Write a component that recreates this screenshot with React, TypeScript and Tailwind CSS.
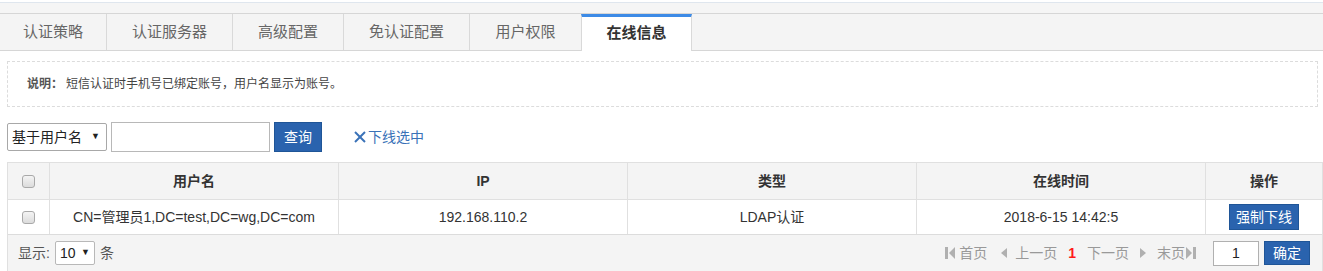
import React from "react";

const tabs = [
  { label: "认证策略", w: "w-[107px]" },
  { label: "认证服务器", w: "w-[126px]" },
  { label: "高级配置", w: "w-[111px]" },
  { label: "免认证配置", w: "w-[126px]" },
  { label: "用户权限", w: "w-[112px]" },
];

const font = "font-['Liberation_Sans','Noto_Sans_CJK_SC',sans-serif]";

function Checkbox() {
  return <span className="inline-block w-[13px] h-[13px] rounded-[3px] border border-[#a9a9a9] bg-gradient-to-b from-[#f4f4f4] to-[#dcdcdc]" />;
}

function PageIcon({ kind }: { kind: "first" | "prev" | "next" | "last" }) {
  return (
    <svg width="12" height="14" viewBox="0 0 12 14" className="fill-[#b0b0b0]">
      {kind === "first" && (
        <>
          <rect x="1" y="1" width="3" height="12" />
          <polygon points="11,1 5,7 11,13" />
        </>
      )}
      {kind === "prev" && <polygon points="9,2 3,7 9,12" />}
      {kind === "next" && <polygon points="3,2 9,7 3,12" />}
      {kind === "last" && (
        <>
          <polygon points="1,1 7,7 1,13" />
          <rect x="8" y="1" width="3" height="12" />
        </>
      )}
    </svg>
  );
}

export default function App() {
  const cols = ["用户名", "IP", "类型", "在线时间"];

  return (
    <div className={`w-[1323px] h-[271px] bg-white overflow-hidden ${font}`}>
      {/* top strip */}
      <div className="h-[2px] bg-white" />
      <div className="h-[12px] border-t border-[#dfe6ee] border-b border-b-[#d6d6d6] bg-[#f5f5f5]" />

      {/* tabs */}
      <div className="flex h-[37px] bg-[#f4f4f4] border-b border-[#d6d6d6]">
        {tabs.map((t) => (
          <div
            key={t.label}
            className={`${t.w} flex items-center justify-center border-r border-[#d9d9d9] text-[15px] text-[#666]`}
          >
            {t.label}
          </div>
        ))}
        <div className="w-[111px] -ml-px h-[37px] flex items-center justify-center bg-white border-t-[3px] border-t-[#3d8be6] border-x border-x-[#d9d9d9] text-[15px] font-bold text-[#333] pb-[1px]">
          在线信息
        </div>
      </div>

      {/* notice */}
      <div className="mx-[7px] mt-[10px] w-[1311px] h-[46px] border border-dashed border-[#dcdcdc] flex items-center pl-[19px] text-[12px] text-[#444]">
        <span className="font-bold text-[#555]">说明：</span>
        <span className="ml-[3px]">短信认证时手机号已绑定账号，用户名显示为账号。</span>
      </div>

      {/* search row */}
      <div className="flex items-center ml-[7px] mt-[15px] h-[30px]">
        <div className="w-[100px] h-[28px] border border-[#a8a8a8] rounded-[2px] flex items-center justify-between pl-[4px] pr-[6px] text-[14px] text-[#222]">
          <span>基于用户名</span>
          <span className="text-[9px]">▼</span>
        </div>
        <div className="ml-[4px] w-[159px] h-[30px] border border-[#b8b8b8]" />
        <div className="ml-[4px] w-[48px] h-[30px] bg-[#2a63ae] border border-[#1f5597] text-white text-[14px] flex items-center justify-center">
          查询
        </div>
        <div className="ml-[31px] flex items-center text-[14px] text-[#3a72b8]">
          <svg width="14" height="14" viewBox="0 0 14 14" className="stroke-[#3a72b8] mr-[1px]" strokeWidth="2">
            <line x1="2" y1="2" x2="12" y2="12" />
            <line x1="12" y1="2" x2="2" y2="12" />
          </svg>
          <span>下线选中</span>
        </div>
      </div>

      {/* table */}
      <div className="ml-[7px] mt-[10px] w-[1316px] border border-[#e0e0e0] text-[14px] text-[#333]">
        <div className="flex h-[37px] bg-[#f4f4f4] border-b border-[#e0e0e0] font-bold">
          <div className="w-[42px] flex items-center justify-center border-r border-[#e0e0e0]">
            <Checkbox />
          </div>
          {cols.map((c) => (
            <div key={c} className="w-[289px] flex items-center justify-center border-r border-[#e0e0e0]">
              {c}
            </div>
          ))}
          <div className="flex-1 flex items-center justify-center">操作</div>
        </div>
        <div className="flex h-[35px] bg-white border-b border-[#dcdcdc]">
          <div className="w-[42px] flex items-center justify-center border-r border-[#e0e0e0]">
            <Checkbox />
          </div>
          <div className="w-[289px] flex items-center justify-center border-r border-[#e0e0e0]">
            CN=管理员1,DC=test,DC=wg,DC=com
          </div>
          <div className="w-[289px] flex items-center justify-center border-r border-[#e0e0e0]">192.168.110.2</div>
          <div className="w-[289px] flex items-center justify-center border-r border-[#e0e0e0]">LDAP认证</div>
          <div className="w-[289px] flex items-center justify-center border-r border-[#e0e0e0]">2018-6-15 14:42:5</div>
          <div className="flex-1 flex items-center justify-center">
            <div className="w-[70px] h-[26px] bg-[#2a63ae] border border-[#1f5597] text-white text-[14px] flex items-center justify-center">
              强制下线
            </div>
          </div>
        </div>
        <div className="flex items-center h-[36px] bg-[#f4f4f4] pl-[10px] pr-[12px] text-[14px] text-[#555]">
          <span>显示:</span>
          <div className="ml-[5px] w-[40px] h-[24px] bg-white border border-[#b8b8b8] rounded-[2px] flex items-center justify-between pl-[4px] pr-[4px] text-[14px] text-[#222]">
            <span>10</span>
            <span className="text-[9px]">▼</span>
          </div>
          <span className="ml-[5px]">条</span>

          <div className="ml-auto flex items-center text-[#999] text-[14px]">
            <PageIcon kind="first" />
            <span className="ml-[3px]">首页</span>
            <span className="ml-[11px]"><PageIcon kind="prev" /></span>
            <span className="ml-[5px]">上一页</span>
            <span className="ml-[11px] text-[#ff1a1a] font-bold">1</span>
            <span className="ml-[11px]">下一页</span>
            <span className="ml-[8px]"><PageIcon kind="next" /></span>
            <span className="ml-[8px]">末页</span>
            <PageIcon kind="last" />
            <div className="ml-[16px] w-[46px] h-[25px] bg-white border border-[#b0b0b0] flex items-center justify-center text-[14px] text-[#222]">
              1
            </div>
            <div className="ml-[5px] w-[46px] h-[24px] bg-[#2a63ae] border border-[#1f5597] text-white text-[14px] flex items-center justify-center">
              确定
            </div>
          </div>
        </div>
      </div>
    </div>
  );
}
